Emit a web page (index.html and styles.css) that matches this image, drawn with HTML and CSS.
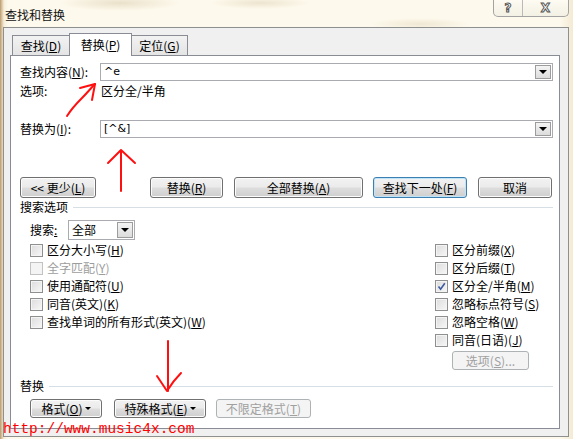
FILE: index.html
```html
<!DOCTYPE html>
<html lang="zh-CN">
<head>
<meta charset="utf-8">
<title>查找和替换</title>
<link rel="stylesheet" href="styles.css">
</head>
<body>
<div class="window">
  <div class="titlebar">
    <span class="title">查找和替换</span>
    <div class="caption">
      <span class="cap help">?</span>
      <span class="cap close">X</span>
    </div>
  </div>
  <div class="frame">
    <div class="tabs">
      <div class="tab t1">查找(<u>D</u>)</div>
      <div class="tab t2 active">替换(<u>P</u>)</div>
      <div class="tab t3">定位(<u>G</u>)</div>
    </div>
    <div class="pane">
      <div class="field-row">
        <span class="field-label">查找内容(<u>N</u>):</span>
        <div class="combo"><span class="combo-text">^e</span><span class="drop"><i class="tri"></i></span></div>
      </div>
      <div class="options-row">
        <span class="field-label">选项:</span>
        <span>区分全/半角</span>
      </div>
      <div class="field-row replace-row">
        <span class="field-label">替换为(<u>I</u>):</span>
        <div class="combo"><span class="combo-text">[^&amp;]</span><span class="drop"><i class="tri"></i></span></div>
      </div>
      <div class="button-row">
        <button class="btn b-less">&lt;&lt; 更少(<u>L</u>)</button>
        <button class="btn b-rep">替换(<u>R</u>)</button>
        <button class="btn b-all">全部替换(<u>A</u>)</button>
        <button class="btn b-next focused">查找下一处(<u>F</u>)</button>
        <button class="btn b-cancel">取消</button>
      </div>
      <div class="section-head"><span>搜索选项</span><span class="rule"></span></div>
      <div class="search-row">
        <span class="search-label">搜索<u>:</u></span>
        <div class="select"><span class="select-text">全部</span><span class="drop"><i class="tri"></i></span></div>
      </div>
      <div class="checks">
        <div class="col col-left">
          <div class="check"><span class="box"></span><span>区分大小写(<u>H</u>)</span></div>
          <div class="check disabled"><span class="box"></span><span>全字匹配(<u>Y</u>)</span></div>
          <div class="check"><span class="box"></span><span>使用通配符(<u>U</u>)</span></div>
          <div class="check"><span class="box"></span><span>同音(英文)(<u>K</u>)</span></div>
          <div class="check"><span class="box"></span><span>查找单词的所有形式(英文)(<u>W</u>)</span></div>
        </div>
        <div class="col col-right">
          <div class="check"><span class="box"></span><span>区分前缀(<u>X</u>)</span></div>
          <div class="check"><span class="box"></span><span>区分后缀(<u>T</u>)</span></div>
          <div class="check"><span class="box checked"><svg viewBox="0 0 9 9" width="9" height="9"><path d="M1.5 4.5 L3.6 7.2 L7.8 1.2" fill="none" stroke="#3d5a9e" stroke-width="1.6"/></svg></span><span>区分全/半角(<u>M</u>)</span></div>
          <div class="check"><span class="box"></span><span>忽略标点符号(<u>S</u>)</span></div>
          <div class="check"><span class="box"></span><span>忽略空格(<u>W</u>)</span></div>
          <div class="check"><span class="box"></span><span>同音(日语)(<u>J</u>)</span></div>
          <button class="btn b-opts" disabled>选项(<u>S</u>)...</button>
        </div>
      </div>
      <div class="section-head replace-head"><span>替换</span><span class="rule"></span></div>
      <div class="bottom-row">
        <button class="btn b-fmt">格式(<u>O</u>) <i class="tri small"></i></button>
        <button class="btn b-special">特殊格式(<u>E</u>) <i class="tri small"></i></button>
        <button class="btn b-nofmt" disabled>不限定格式(<u>T</u>)</button>
      </div>
    </div>
  </div>
  <svg class="marks" width="573" height="439" viewBox="0 0 573 439">
    <g fill="none" stroke="#ff1010" stroke-width="2" stroke-linecap="round" stroke-linejoin="round">
      <path d="M67 116 C 72 108, 76 104, 82 98 C 87 93, 91 88, 95 84"/>
      <path d="M80 88 L95 84 L92 100"/>
      <path d="M121 191 L121 151"/>
      <path d="M108 163 L121 150 L135 163"/>
      <path d="M168 341 L168 391"/>
      <path d="M157 376 L167 391 C 172 383, 176 378, 181 373"/>
    </g>
  </svg>
  <div class="watermark">http://www.music4x.com</div>
</div>
</body>
</html>
```
FILE: styles.css
```css
* { box-sizing: border-box; }
html, body { margin: 0; padding: 0; }
body {
  width: 573px;
  height: 439px;
  overflow: hidden;
  font-family: "Noto Sans CJK SC", "Liberation Sans", sans-serif;
  font-size: 12px;
  color: #000;
}
u { text-decoration: underline; text-underline-offset: 1px; }

.window {
  position: relative;
  width: 573px;
  height: 439px;
  display: flex;
  flex-direction: column;
  background:
    radial-gradient(ellipse 60px 8px at 120px 3px, rgba(200,180,140,0.35), transparent),
    radial-gradient(ellipse 50px 6px at 260px 3px, rgba(200,180,140,0.3), transparent),
    radial-gradient(ellipse 50px 6px at 420px 24px, rgba(200,180,140,0.25), transparent),
    linear-gradient(to right, #b99a72 0, #ddc7a4 2px, #f6efdc 4px, #fdf9ec 8px, #fdf9ec 560px, #f4ead4 573px);
}

.titlebar {
  height: 27px;
  display: flex;
  align-items: flex-start;
}
.title {
  margin: 7px 0 0 5px;
  line-height: 16px;
  font-size: 12px;
  color: #111;
}
.caption {
  margin-left: auto;
  margin-right: 4px;
  display: flex;
  height: 17px;
  border: 1px solid #a3a3a3;
  border-top: none;
  border-radius: 0 0 5px 5px;
  background: linear-gradient(#fdfbf2, #f3f0e4);
}
.cap {
  display: flex;
  align-items: center;
  justify-content: center;
  font-family: "DejaVu Sans", sans-serif;
  font-weight: bold;
  font-size: 12px;
  color: #fff;
  -webkit-text-stroke: 1px #555;
}
.cap.help { width: 29px; border-right: 1px solid #b9b9b9; }
.cap.close { width: 45px; }

.frame {
  flex: 1;
  margin: 0 4px 2px 3px;
  background: #f0f0f0;
  border: 1px solid #8e8f8f;
  padding: 5px 8px 7px 6px;
  display: flex;
  flex-direction: column;
}

.tabs {
  display: flex;
  align-items: flex-end;
  height: 22px;
  padding-left: 2px;
  position: relative;
  z-index: 1;
}
.tab {
  height: 20px;
  display: flex;
  align-items: center;
  justify-content: center;
  border: 1px solid #898c95;
  border-bottom: none;
  background: linear-gradient(#f2f2f2, #e4e4e4);
  line-height: 16px;
  padding-top: 1px;
}
.t1 { width: 57px; border-right: none; }
.t2 { width: 63px; }
.t3 { width: 56px; border-left: none; }
.tab.active {
  height: 23px;
  margin-bottom: -1px;
  background: #fff;
  padding-bottom: 2px;
}

.pane {
  flex: 1;
  background: #fff;
  border: 1px solid #898c95;
  padding: 7px 6px 0 9px;
  display: flex;
  flex-direction: column;
}

.field-row { display: flex; align-items: center; height: 18px; }
.field-label { width: 80px; line-height: 16px; }
.combo {
  flex: 1;
  height: 18px;
  border: 1px solid #a9abb0;
  display: flex;
  align-items: center;
  padding: 0 1px 0 3px;
}
.combo-text { flex: 1; font-family: "DejaVu Sans", sans-serif; font-size: 11px; line-height: 14px; }
.drop {
  width: 16px;
  height: 14px;
  border: 1px solid #9c9c9c;
  background: linear-gradient(#f4f4f4, #dcdcdc);
  display: flex;
  align-items: center;
  justify-content: center;
}
.tri {
  display: inline-block;
  width: 0; height: 0;
  border-left: 4px solid transparent;
  border-right: 4px solid transparent;
  border-top: 4px solid #000;
}
.tri.small {
  border-left-width: 3px;
  border-right-width: 3px;
  border-top-width: 3px;
  vertical-align: middle;
  margin-left: 2px;
}

.options-row { display: flex; height: 17px; margin-top: 1px; align-items: center; line-height: 16px; }
.options-row .field-label { width: 81px; }

.replace-row { margin-top: 21px; }

.button-row { display: flex; margin-top: 39px; height: 21px; }
.btn {
  font-family: "Noto Sans CJK SC", "Liberation Sans", sans-serif;
  font-size: 12px;
  color: #000;
  height: 21px;
  padding: 0;
  border: 1px solid #707070;
  border-radius: 3px;
  background: linear-gradient(#f2f2f2 0, #ebebeb 48%, #dddddd 52%, #cfcfcf 100%);
  box-shadow: inset 0 0 0 1px #fcfcfc;
  line-height: 16px;
  display: flex;
  align-items: center;
  justify-content: center;
}
.btn:disabled {
  color: #a0a0a0;
  border-color: #adb2b5;
  background: #f4f4f4;
  box-shadow: none;
}
.btn.focused {
  border-color: #3c7fb1;
  box-shadow: inset 0 0 0 1px #48d7fb;
  background: linear-gradient(#eaf6fd 0, #d9f0fc 48%, #bee6fd 52%, #a7d9f5 100%);
  box-shadow: inset 0 0 0 1px #d6eefc;
}
.b-less { width: 76px; }
.b-rep { width: 73px; margin-left: 54px; }
.b-all { width: 129px; margin-left: 11px; }
.b-next { width: 94px; margin-left: 10px; }
.b-cancel { width: 74px; margin-left: 11px; }
.btn.focused { background: linear-gradient(#f2f2f2 0, #ebebeb 48%, #dddddd 52%, #cfcfcf 100%); box-shadow: inset 0 0 0 1px #bfe4f8; }

.section-head {
  display: flex;
  align-items: center;
  height: 16px;
  margin-top: 1px;
  line-height: 16px;
}
.section-head .rule {
  flex: 1;
  height: 1px;
  background: #d5dfe5;
  margin-left: 5px;
  margin-top: 1px;
}

.search-row { display: flex; align-items: center; margin-top: 5px; height: 20px; padding-left: 10px; }
.search-label { width: 38px; line-height: 16px; }
.select {
  width: 67px;
  height: 20px;
  border: 1px solid #a9abb0;
  display: flex;
  align-items: center;
  padding: 0 1px 0 3px;
}
.select-text { flex: 1; line-height: 16px; }
.select .drop { height: 16px; width: 16px; }

.checks { display: flex; margin-top: 1px; }
.col { display: flex; flex-direction: column; }
.col-left { padding-left: 10px; }
.col-right { margin-left: auto; width: 118px; }
.check { display: flex; align-items: center; height: 18px; line-height: 16px; }
.box {
  width: 13px;
  height: 13px;
  border: 1px solid #8e8f8f;
  background: linear-gradient(135deg, #dcdcdc, #f7f7f7);
  box-shadow: inset 0 0 0 1px #f4f4f4;
  margin-right: 4px;
  display: flex;
  align-items: center;
  justify-content: center;
}
.check.disabled { color: #9d9d9d; }
.check.disabled .box { border-color: #c2c2c2; background: #f4f4f4; }
.b-opts { width: 77px; height: 19px; margin-left: 17px; margin-top: 2px; }

.replace-head { margin-top: 8px; }
.bottom-row { display: flex; margin-top: 5px; height: 19px; padding-left: 10px; }
.bottom-row .btn { height: 19px; }
.b-fmt { width: 72px; }
.b-special { width: 92px; margin-left: 12px; }
.b-nofmt { width: 95px; margin-left: 10px; }

.marks { position: absolute; left: 0; top: 0; pointer-events: none; }
.watermark {
  position: absolute;
  left: 3px;
  top: 421px;
  font-family: "Liberation Mono", monospace;
  font-size: 14.5px;
  line-height: 17px;
  color: #ff0000;
}
```
